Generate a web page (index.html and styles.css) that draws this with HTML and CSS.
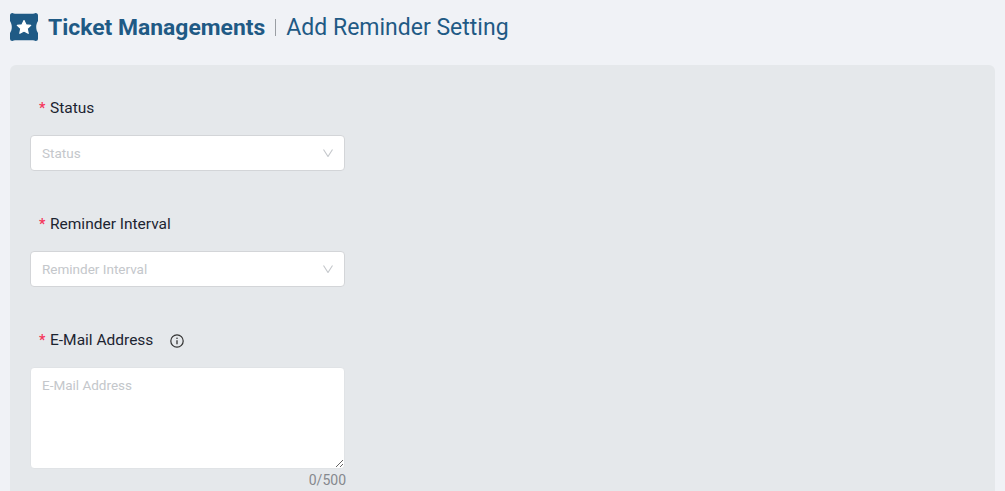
FILE: index.html
```html
<!DOCTYPE html>
<html>
<head lang="en">
    <meta charset="UTF-8">
    <title>Add Reminder Setting</title>
    <link rel="stylesheet" href="styles.css">
</head>
<body>

<div class="page-head">
    <svg class="logo" width="28" height="28" viewBox="0 0 28 28">
        <path fill="#1f5a85" d="M2.500 0c.8.6 1.500.8 2.500.8h18c1 0 1.700-.2 2.500-.8a2.500 2.500 0 0 1 2.500 2.500v5.500c-1 1.500-1.800 3.500-1.800 6s.8 4.500 1.800 6v5.500a2.500 2.500 0 0 1-2.500 2.500c-.8-.6-1.500-.8-2.500-.8H5c-1 0-1.700.2-2.500.8A2.500 2.500 0 0 1 0 25.500V20c1-1.500 1.800-3.500 1.800-6S1 9.500 0 8V2.500A2.500 2.500 0 0 1 2.500 0z"/>
        <path fill="#fff" stroke="#fff" stroke-width="1.200" stroke-linejoin="round" d="M14 7.500l2 4.300 4.700.6-3.500 3.200 1 4.700-4.200-2.400-4.200 2.400 1-4.700-3.500-3.200 4.700-.6z"/>
    </svg>
    <span class="head-title">Ticket Managements</span>
    <span class="head-sep"></span>
    <span class="head-sub">Add Reminder Setting</span>
</div>

<div class="panel">
    <div class="field">
        <label class="field-label"><span class="req">*</span>Status</label>
        <div class="select">
            <span>Status</span>
            <svg width="10" height="8" viewBox="0 0 10 8"><path d="M.5 .5l4.500 7 4.500-7" fill="none" stroke="#c4c7cb" stroke-width="1.100"/></svg>
        </div>
    </div>
    <div class="field">
        <label class="field-label"><span class="req">*</span>Reminder Interval</label>
        <div class="select">
            <span>Reminder Interval</span>
            <svg width="10" height="8" viewBox="0 0 10 8"><path d="M.5 .5l4.500 7 4.500-7" fill="none" stroke="#c4c7cb" stroke-width="1.100"/></svg>
        </div>
    </div>
    <div class="field">
        <label class="field-label"><span class="req">*</span>E-Mail Address
            <svg class="info" width="14" height="14" viewBox="0 0 14 14">
                <circle cx="7" cy="7" r="6.200" fill="none" stroke="#333" stroke-width="1.200"/>
                <path d="M7 6.200v4" stroke="#333" stroke-width="1.300"/>
                <circle cx="7" cy="4.200" r=".8" fill="#333"/>
            </svg>
        </label>
        <textarea class="area" placeholder="E-Mail Address"></textarea>
        <div class="count">0/500</div>
    </div>
</div>

</body>
</html>
```

FILE: styles.css
```css
html,body{
    height: 100%;
    margin: 0;
    overflow: hidden;
}
body{
    display: flex;
    flex-direction: column;
    background: #f0f2f6;
    font-family: "Roboto", "Noto Sans", sans-serif;
    color: #1c2431;
}
.page-head{
    display: flex;
    align-items: center;
    height: 54px;
    padding-left: 10px;
}
.logo{
    margin-right: 10px;
}
.head-title{
    font-size: 22.900px;
    font-weight: 700;
    color: #1f5a85;
}
.head-sep{
    width: 1px;
    height: 17px;
    margin: 0 10px;
    background: #9a9ea3;
}
.head-sub{
    font-size: 23px;
    color: #1f5a85;
}
.panel{
    flex: 1;
    min-height: 0;
    margin: 11px 10px 0;
    padding: 30px 20px 0;
    background: #e5e8eb;
    border-radius: 6px 6px 0 0;
}
.field{
    width: 315px;
    margin-bottom: 40px;
}
.field:last-child{
    margin-bottom: 0;
}
.field-label{
    display: flex;
    align-items: center;
    height: 26px;
    margin-bottom: 14px;
    padding-left: 9px;
    font-size: 15.500px;
}
.req{
    width: 11px;
    color: #f5365c;
    font-size: 14px;
    font-weight: 700;
}
.info{
    position: relative;
    top: 1px;
    margin-left: 17px;
}
.select{
    display: flex;
    align-items: center;
    justify-content: space-between;
    box-sizing: border-box;
    height: 36px;
    padding: 0 11px;
    background: #fff;
    border: 1px solid #d3d5d8;
    border-radius: 4px;
    font-size: 13.500px;
    color: #c4c7cb;
}
.area{
    display: block;
    box-sizing: border-box;
    width: 315px;
    height: 102px;
    padding: 9px 11px;
    background: #fff;
    border: 1px solid #e0e3e6;
    border-radius: 4px;
    outline: 0;
    font-family: inherit;
    font-size: 13.500px;
}
.area::placeholder{
    color: #c4c7cb;
}
.count{
    margin: 3px -1px 0 0;
    text-align: right;
    font-size: 14px;
    color: #85898e;
}
```
